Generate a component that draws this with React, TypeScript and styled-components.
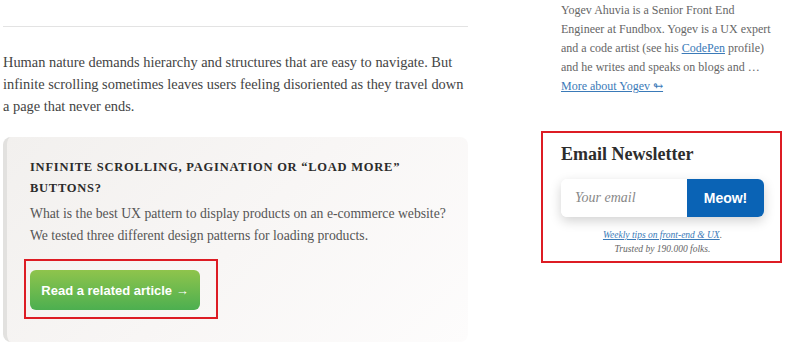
import React from 'react';
import styled, { createGlobalStyle } from 'styled-components';

const GlobalStyle = createGlobalStyle`
  html, body {
    margin: 0;
    padding: 0;
    background: #fff;
  }
  body {
    font-family: "Liberation Serif", "DejaVu Serif", serif;
    color: #333;
  }
`;

const Page = styled.div`
  width: 800px;
  height: 346px;
  overflow: hidden;
  display: flex;
  padding-left: 3px;
  box-sizing: border-box;
`;

const Main = styled.main`
  width: 465px;
  flex: none;
  display: flex;
  flex-direction: column;
`;

const Rule = styled.hr`
  margin: 26px 0 0;
  border: 0;
  border-top: 1px solid #e3e3e3;
`;

const Lead = styled.p`
  margin: 24px 0 0;
  font-size: 14.4px;
  line-height: 22px;
  color: #444;
  white-space: nowrap;
`;

const Card = styled.aside`
  margin-top: 20px;
  height: 205px;
  box-sizing: border-box;
  padding: 20px 24px 0 23px;
  border-left: 4px solid #e2e1df;
  border-radius: 8px;
  background: linear-gradient(135deg, #f2f0ee 0%, #f8f6f5 50%, #fdfcfc 100%);
`;

const CardTitle = styled.h3`
  margin: 0;
  font-size: 12.5px;
  line-height: 21px;
  font-weight: 700;
  letter-spacing: 0.75px;
  text-transform: uppercase;
  color: #2b2b2b;
`;

const CardText = styled.p`
  margin: 4px 0 0;
  font-size: 13.7px;
  line-height: 22px;
  color: #555;
  white-space: nowrap;
`;

const Highlight = styled.div`
  margin: 12px 0 0 -6px;
  width: 194px;
  height: 60px;
  box-sizing: border-box;
  border: 2px solid #dd1c24;
  padding: 9px 0 0 4px;
`;

const GreenButton = styled.a`
  display: flex;
  align-items: center;
  justify-content: center;
  width: 170px;
  height: 40px;
  border-radius: 6px;
  background: linear-gradient(180deg, #8fc44c 0%, #4caf50 100%);
  color: #fff;
  font-family: "Liberation Sans", Arial, sans-serif;
  font-weight: 700;
  font-size: 13px;
  text-decoration: none;
`;

const Side = styled.div`
  margin-left: 73px;
  width: 241px;
  flex: none;
  display: flex;
  flex-direction: column;
`;

const Bio = styled.p`
  margin: 0 0 0 20px;
  padding-top: 1px;
  font-size: 12px;
  line-height: 19px;
  color: #666;
  white-space: nowrap;
`;

const BlueLink = styled.a`
  color: #3a7ab8;
  text-decoration: underline;
`;

const Newsletter = styled.section`
  margin-top: 35px;
  height: 132px;
  box-sizing: border-box;
  border: 2px solid #dd1c24;
  padding: 10px 16px 0 18px;
`;

const NewsTitle = styled.h3`
  margin: 0;
  font-size: 18px;
  line-height: 22px;
  font-weight: 700;
  color: #2d2d2d;
`;

const Form = styled.form`
  margin-top: 14px;
  display: flex;
  height: 38px;
  border-radius: 6px;
  box-shadow: 0 4px 12px rgba(0, 0, 0, 0.18);
`;

const EmailInput = styled.input`
  flex: 1;
  min-width: 0;
  border: 0;
  border-radius: 6px 0 0 6px;
  padding: 0 14px;
  font-family: "Liberation Serif", serif;
  font-style: italic;
  font-size: 14px;
  color: #333;
  background: #fff;
  outline: none;
  &::placeholder {
    color: #888;
  }
`;

const Meow = styled.button`
  width: 77px;
  border: 0;
  border-radius: 0 6px 6px 0;
  background: #0a63b5;
  color: #fff;
  font-family: "Liberation Sans", Arial, sans-serif;
  font-weight: 700;
  font-size: 14px;
`;

const Fine = styled.p`
  margin: 11px 0 0;
  text-align: center;
  font-size: 9.5px;
  line-height: 14px;
  font-style: italic;
  color: #666;
`;

export default function App() {
  return (
    <>
      <GlobalStyle />
      <Page>
        <Main>
          <Rule />
          <Lead>
            Human nature demands hierarchy and structures that are easy to navigate. But
            <br />
            infinite scrolling sometimes leaves users feeling disoriented as they travel down
            <br />
            a page that never ends.
          </Lead>
          <Card>
            <CardTitle>Infinite scrolling, pagination or “load more” buttons?</CardTitle>
            <CardText>
              What is the best UX pattern to display products on an e-commerce website?
              <br />
              We tested three different design patterns for loading products.
            </CardText>
            <Highlight>
              <GreenButton href="#">Read a related article →</GreenButton>
            </Highlight>
          </Card>
        </Main>
        <Side>
          <Bio>
            Yogev Ahuvia is a Senior Front End
            <br />
            Engineer at Fundbox. Yogev is a UX expert
            <br />
            and a code artist (see his <BlueLink href="#">CodePen</BlueLink> profile)
            <br />
            and he writes and speaks on blogs and …
            <br />
            <BlueLink href="#">More about Yogev ↬</BlueLink>
          </Bio>
          <Newsletter>
            <NewsTitle>Email Newsletter</NewsTitle>
            <Form onSubmit={e => e.preventDefault()}>
              <EmailInput placeholder="Your email" />
              <Meow type="submit">Meow!</Meow>
            </Form>
            <Fine>
              <BlueLink href="#">Weekly tips on front-end &amp; UX</BlueLink>.
              <br />
              Trusted by 190.000 folks.
            </Fine>
          </Newsletter>
        </Side>
      </Page>
    </>
  );
}
